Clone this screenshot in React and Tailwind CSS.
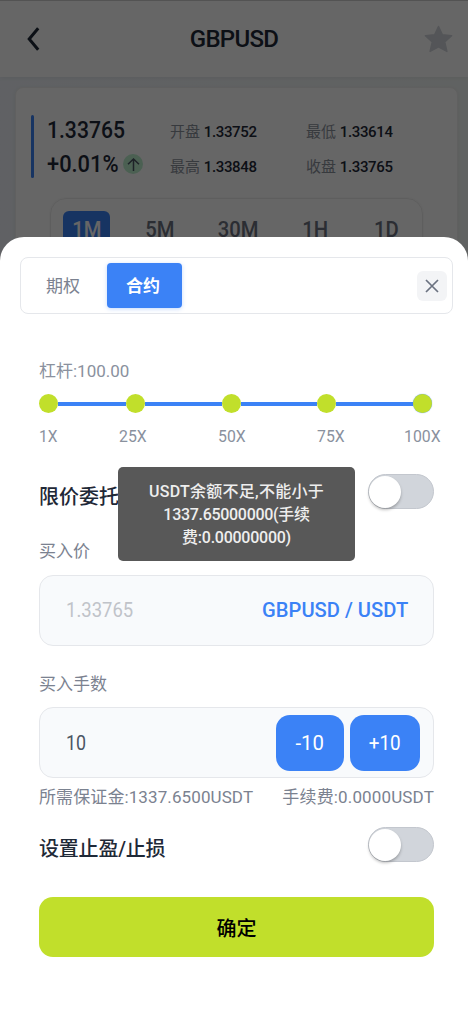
import { useState } from "react";

const periods = [
  { name: "1M", width: "w-[47px]" },
  { name: "5M", width: "w-[50px]" },
  { name: "30M", width: "w-[58px]" },
  { name: "1H", width: "w-[47px]" },
  { name: "1D", width: "w-[47px]" },
];

const quotes = [
  { label: "开盘", value: "1.33752" },
  { label: "最低", value: "1.33614" },
  { label: "最高", value: "1.33848" },
  { label: "收盘", value: "1.33765" },
];

function Toggle() {
  const [on, setOn] = useState(false);
  return (
    <button
      onClick={() => setOn(!on)}
      className={`flex h-[35px] w-[66px] items-center rounded-full border border-[#c3c7ce] bg-[#d1d5db] ${
        on ? "justify-end" : "justify-start"
      }`}
    >
      <span className="size-8 rounded-full bg-white shadow-[0_2px_3px_rgba(0,0,0,0.25)]" />
    </button>
  );
}

function Dot({ last }) {
  return (
    <span
      className={`z-10 size-[19px] shrink-0 rounded-full bg-[#c1df2b] ${
        last ? "shadow-[0_0_1px_#3b82f6]" : ""
      }`}
    />
  );
}

function Market() {
  return (
    <div className="h-full bg-gradient-to-r from-[#eff3f9] to-[#f1f5f4]">
      <header className="flex h-[77px] items-center justify-between border-t border-[#d0d0d0] bg-white pr-[15px] pl-[27px] shadow-[0_1px_4px_rgba(0,0,0,0.06)]">
        <svg width="13" height="24" viewBox="0 0 13 24" fill="none" stroke="#1f2937" strokeWidth="3">
          <path d="M11.2 1.2 2.2 12l9 10.8" />
        </svg>
        <h1 className="ml-1 text-2xl font-medium tracking-[-0.7px] text-[#1f2937]">GBPUSD</h1>
        <svg width="29" height="28" viewBox="0 0 29 28" fill="#d1d5db" stroke="#d1d5db" strokeWidth="1.5" strokeLinejoin="round">
          <path d="m14.5 1.5 3.9 8.2 9.2 1-6.9 6.2 2.2 9.5-8.4-4.5-8.4 4.5 2.2-9.5-6.9-6.2 9.2-1z" />
        </svg>
      </header>
      <section className="mt-[10px] ml-[15px] h-[400px] w-[443px] rounded-lg border border-[#f0f0f0] bg-white pt-[27px] shadow-[0_1px_4px_rgba(0,0,0,0.06)]">
        <div className="flex h-[63px] pl-[15px]">
          <div className="w-[3px] rounded bg-[#3b82f6]" />
          <div className="-mt-[2px] w-[136px] pl-[13px] text-2xl leading-[34px] font-medium text-[#1f2937]">
            <p className="h-[34px] origin-left scale-x-[.88] whitespace-nowrap">1.33765</p>
            <div className="flex h-[34px] items-center">
              <span className="w-[76px] origin-left scale-x-[.91] whitespace-nowrap">+0.01%</span>
              <span className="flex size-5 items-center justify-center rounded-full bg-[#bbf0ce]">
                <svg width="13" height="13" viewBox="0 0 13 13" fill="none" stroke="#4b5563" strokeWidth="1.5">
                  <path d="M6.5 13V1M1 6.3 6.5 1 12 6.3" />
                </svg>
              </span>
            </div>
          </div>
          <div className="grid h-[70px] grid-cols-[136px_120px] text-[15px] leading-[35px]">
            {quotes.map((q) => (
              <p key={q.label} className="text-[#8b919c]">
                {q.label}{" "}
                <span className="font-medium tracking-[-0.35px] text-[#1f2937]">{q.value}</span>
              </p>
            ))}
          </div>
        </div>
        <div className="mr-[34px] ml-[34px] mt-[20px] flex h-[70px] justify-between rounded-2xl border border-[#ececec] px-3 pt-3 shadow-[0_0_3px_rgba(0,0,0,0.05)]">
          {periods.map((p, i) => (
            <span
              key={p.name}
              className={`h-[46px] rounded-md pt-[5px] text-center text-[22px] leading-7 font-medium ${p.width} ${
                i === 0 ? "bg-[#3b82f6] text-white" : "text-[#6b7280]"
              }`}
            >
              <span className="inline-block scale-x-[.92]">{p.name}</span>
            </span>
          ))}
        </div>
      </section>
    </div>
  );
}

function Leverage() {
  return (
    <div className="text-[17px] text-[#8a919e]">
      <p className="h-6 leading-6">杠杆:100.00</p>
      <div className="mt-[11px] flex h-[19px] w-[394px] items-center">
        <Dot />
        <span className="h-1 w-[68px] bg-[#3b82f6]" />
        <Dot />
        <span className="h-1 w-[77px] bg-[#3b82f6]" />
        <Dot />
        <span className="h-1 w-[76px] bg-[#3b82f6]" />
        <Dot />
        <span className="h-1 w-[77px] bg-[#3b82f6]" />
        <Dot last />
      </div>
      <div className="mt-[11px] -mr-[7px] flex h-6 justify-between leading-6">
        <span className="w-[80px] origin-left scale-x-[.91]">1X</span>
        <span className="w-[99px] origin-left scale-x-[.93]">25X</span>
        <span className="w-[99px] origin-left scale-x-[.93]">50X</span>
        <span className="w-[87px] origin-left scale-x-[.93]">75X</span>
        <span className="w-[37px] origin-left scale-x-[.93]">100X</span>
      </div>
    </div>
  );
}

function OrderSheet() {
  const [lots, setLots] = useState(10);

  return (
    <div className="absolute inset-x-0 top-[237px] bottom-0 rounded-t-[24px] bg-white pt-5">
      <div className="mr-[15px] ml-5 flex h-[57px] items-center rounded-lg border border-[#e5e7eb] pr-[5px] text-[17px]">
        <button className="w-[86px] pt-[2px] pr-[2px] text-[#7b8290]">期权</button>
        <button className="h-[45px] w-[75px] rounded bg-[#3b82f6] pt-[2px] pr-[3px] font-bold text-white shadow-[0_1px_4px_rgba(59,130,246,0.3)]">
          合约
        </button>
        <button className="ml-auto flex size-[30px] items-center justify-center rounded-md bg-[#f3f4f6]">
          <svg width="14" height="14" viewBox="0 0 14 14" fill="none" stroke="#6b7280" strokeWidth="1.7">
            <path d="m1 1 12 12M13 1 1 13" />
          </svg>
        </button>
      </div>

      <div className="mr-[34px] ml-[39px] pt-[45px] text-[17px] text-[#7b8290]">
        <Leverage />

        <div className="mt-[26px] flex h-[35px] items-center justify-between">
          <span className="pt-[11px] text-xl leading-7 font-medium text-[#1f2937]">限价委托</span>
          <Toggle />
        </div>

        <p className="mt-[30px] h-6 leading-6">买入价</p>
        <div className="mt-3 flex h-[71px] items-center justify-between rounded-[14px] border border-[#e5e7eb] bg-[#f8fafc] pr-[25px] pl-[26px] text-[21px]">
          <span className="origin-left scale-x-[.88] text-[#c0c3c9]">1.33765</span>
          <span className="origin-right scale-x-[.96] font-medium text-[#3b82f6]">GBPUSD / USDT</span>
        </div>

        <p className="mt-[26px] h-6 leading-6">买入手数</p>
        <div className="mt-[11px] flex h-[71px] items-center rounded-[14px] border border-[#e5e7eb] bg-[#f8fafc] pr-[13px] pl-[26px] text-[21px]">
          <span className="flex-1 origin-left scale-x-[.85] pt-[2px] text-[#4b5563]">{lots}</span>
          <button
            onClick={() => setLots(Math.max(0, lots - 10))}
            className="h-14 w-[68px] rounded-[14px] bg-[#3b82f6] pt-[2px] text-white"
          >
            <span className="inline-block scale-x-[.97]">-10</span>
          </button>
          <button
            onClick={() => setLots(lots + 10)}
            className="ml-[6px] h-14 w-[70px] rounded-[14px] bg-[#3b82f6] pt-[2px] text-white"
          >
            <span className="inline-block scale-x-[.9]">+10</span>
          </button>
        </div>
        <div className="mt-[7px] flex h-6 justify-between leading-6">
          <span className="tracking-[0.1px]">所需保证金:1337.6500USDT</span>
          <span className="tracking-[0.15px]">手续费:0.0000USDT</span>
        </div>

        <div className="mt-[18px] flex h-[35px] items-center justify-between">
          <span className="pt-[9px] text-xl leading-7 font-medium tracking-[-0.2px] text-[#1f2937]">
            设置止盈/止损
          </span>
          <Toggle />
        </div>

        <button className="mt-[35px] h-[60px] w-full rounded-[14px] bg-[#c1df2b] pt-[3px] text-xl font-medium text-black">
          确定
        </button>
      </div>
    </div>
  );
}

export default function App() {
  return (
    <div className="relative h-[1026px] w-[468px] overflow-hidden font-[Roboto,'Noto_Sans_CJK_SC',sans-serif]">
      <Market />
      <div className="absolute inset-0 bg-black/60" />
      <OrderSheet />
      <div className="absolute top-[467px] left-[118px] flex h-[94px] w-[237px] flex-col justify-center rounded-[5px] bg-[#585858] text-center text-base leading-[23px] font-medium text-[#eeeeee]">
        <p className="tracking-[0.25px]">USDT余额不足,不能小于</p>
        <p className="tracking-[-0.3px]">1337.65000000(手续</p>
        <p className="tracking-[-0.25px]">费:0.00000000)</p>
      </div>
    </div>
  );
}
